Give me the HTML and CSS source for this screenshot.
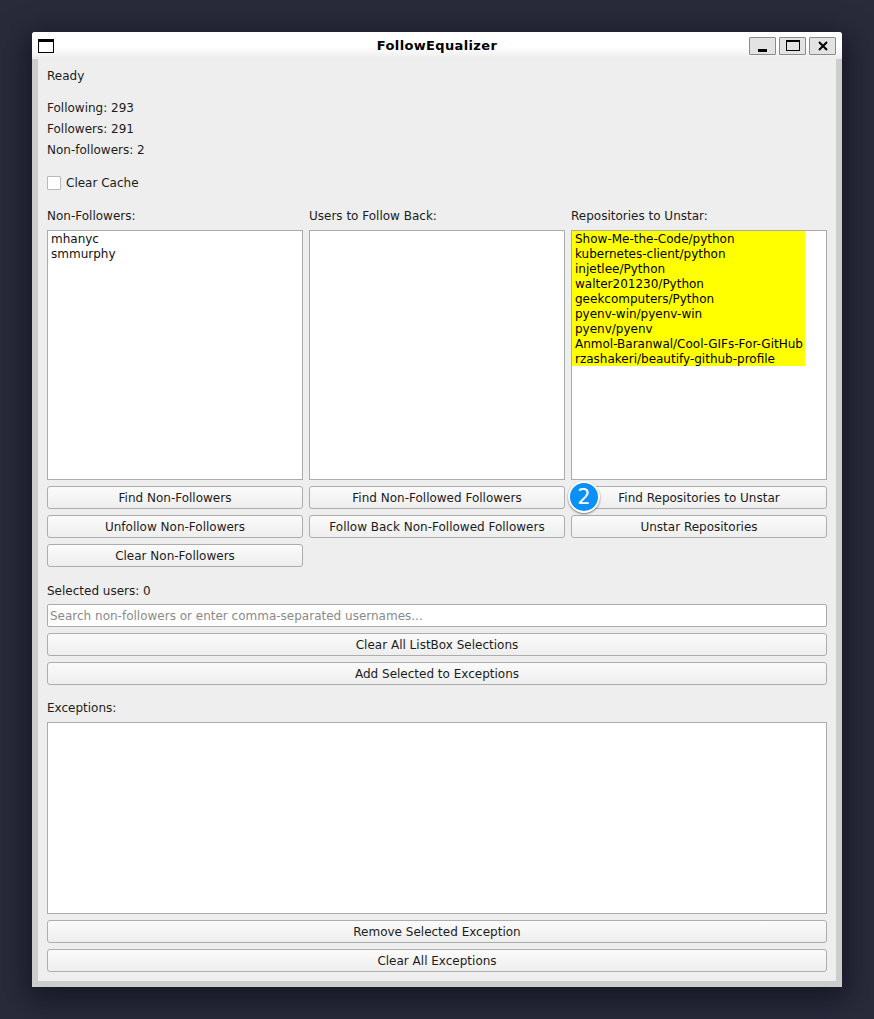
FILE: index.html
```html
<!DOCTYPE html>
<html lang="en">
<head>
<meta charset="utf-8">
<title>FollowEqualizer</title>
<link rel="stylesheet" href="styles.css">
</head>
<body>
<div class="window">
  <header class="titlebar">
    <svg class="app-icon" width="16" height="14" viewBox="0 0 16 14"><rect x="0.5" y="0.5" width="15" height="13" fill="#fff" stroke="#000"/><rect x="0" y="0" width="16" height="3" fill="#000"/></svg>
    <div class="title">FollowEqualizer</div>
    <div class="win-buttons">
      <button class="win-btn"><svg width="9" height="3" viewBox="0 0 9 3" class="i-min"><rect width="9" height="3" fill="#000"/></svg></button>
      <button class="win-btn"><svg width="14" height="11" viewBox="0 0 14 11"><rect x="0.5" y="0.5" width="13" height="10" fill="none" stroke="#000"/><rect width="14" height="2" fill="#000"/></svg></button>
      <button class="win-btn"><svg width="10" height="10" viewBox="0 0 10 10"><path d="M1 1 L9 9 M9 1 L1 9" stroke="#000" stroke-width="2" fill="none"/></svg></button>
    </div>
  </header>
  <main class="content">
    <div class="text-line">Ready</div>
    <div class="stats">
      <div class="text-line">Following: 293</div>
      <div class="text-line">Followers: 291</div>
      <div class="text-line">Non-followers: 2</div>
    </div>
    <label class="check-row"><span class="check"></span><span>Clear Cache</span></label>
    <section class="columns">
      <div class="column">
        <div class="text-line list-label">Non-Followers:</div>
        <div class="listbox tall"><div>mhanyc</div><div>smmurphy</div></div>
        <button class="btn">Find Non-Followers</button>
        <button class="btn">Unfollow Non-Followers</button>
        <button class="btn">Clear Non-Followers</button>
      </div>
      <div class="column">
        <div class="text-line list-label">Users to Follow Back:</div>
        <div class="listbox tall"></div>
        <button class="btn">Find Non-Followed Followers</button>
        <button class="btn">Follow Back Non-Followed Followers</button>
      </div>
      <div class="column">
        <div class="text-line list-label">Repositories to Unstar:</div>
        <div class="listbox tall hl-list">
          <div class="hl">Show-Me-the-Code/python</div>
          <div class="hl">kubernetes-client/python</div>
          <div class="hl">injetlee/Python</div>
          <div class="hl">walter201230/Python</div>
          <div class="hl">geekcomputers/Python</div>
          <div class="hl">pyenv-win/pyenv-win</div>
          <div class="hl">pyenv/pyenv</div>
          <div class="hl">Anmol-Baranwal/Cool-GIFs-For-GitHub</div>
          <div class="hl">rzashakeri/beautify-github-profile</div>
        </div>
        <div class="badge-wrap">
          <button class="btn">Find Repositories to Unstar</button>
          <span class="badge">2</span>
        </div>
        <button class="btn">Unstar Repositories</button>
      </div>
    </section>
    <section class="stack selected">
      <div class="text-line sel-label">Selected users: 0</div>
      <input class="search" type="text" placeholder="Search non-followers or enter comma-separated usernames...">
      <button class="btn">Clear All ListBox Selections</button>
      <button class="btn">Add Selected to Exceptions</button>
    </section>
    <section class="stack exceptions">
      <div class="text-line list-label">Exceptions:</div>
      <div class="listbox short"></div>
      <button class="btn">Remove Selected Exception</button>
      <button class="btn">Clear All Exceptions</button>
    </section>
  </main>
</div>
</body>
</html>
```
FILE: styles.css
```css
* { box-sizing: border-box; }
html, body { margin: 0; height: 100%; }
body {
  background: #292b3b;
  font-family: "DejaVu Sans", sans-serif;
  font-size: 12px;
  color: #1c1c1c;
  padding: 32px;
  overflow: hidden;
}
.window {
  width: 810px;
  height: 955px;
  background: #cdcdcd;
  border-radius: 3px 3px 0 0;
  box-shadow: 0 8px 28px 6px rgba(10, 10, 20, 0.55);
  display: flex;
  flex-direction: column;
}
.titlebar {
  height: 27px;
  flex: none;
  display: grid;
  grid-template-columns: 1fr auto 1fr;
  align-items: center;
  padding: 0 6px;
  background: linear-gradient(#fff 0%, #fff 55%, #ececec 100%);
  border-radius: 3px 3px 0 0;
}
.app-icon { display: block; }
.title {
  font-weight: bold;
  font-size: 13px;
  letter-spacing: 0.35px;
  color: #000;
  margin-top: -1px;
}
.win-buttons { display: flex; gap: 3px; justify-content: flex-end; }
.win-btn {
  width: 27px;
  height: 18px;
  padding: 0;
  border: 1px solid #8b8b8b;
  border-radius: 1px;
  background: #e3e3e3;
  display: flex;
  align-items: center;
  justify-content: center;
}
.i-min { margin-top: 9px; }
.content {
  flex: 1;
  margin: 0 6px 6px;
  background: #eeeeee;
  padding: 9px;
  display: flex;
  flex-direction: column;
}
.text-line { height: 15px; line-height: 17px; white-space: nowrap; }
.stats { display: flex; flex-direction: column; gap: 6px; margin-top: 17px; }
.check-row { display: flex; align-items: center; gap: 5px; height: 15px; margin-top: 18px; }
.check {
  width: 14px;
  height: 14px;
  background: #fff;
  border: 1px solid #b9b9b9;
  border-radius: 1px;
  flex: none;
}
.columns {
  display: grid;
  grid-template-columns: repeat(3, 256px);
  gap: 6px;
  margin-top: 18px;
  height: 359px;
}
.column, .stack { display: flex; flex-direction: column; gap: 6px; }
.list-label { margin-bottom: 1px; }
.listbox {
  background: #fff;
  border: 1px solid #ababab;
  padding: 1px 0;
  line-height: 15px;
  color: #111;
}
.listbox > div { padding-left: 3px; }
.tall { height: 250px; }
.short { height: 192px; }
.hl-list { display: flex; flex-direction: column; padding-top: 0; }
.listbox .hl { background: #ffff00; color: #000; width: 233px; height: 15px; line-height: 17px; white-space: nowrap; }
.btn {
  display: block;
  width: 100%;
  height: 23px;
  flex: none;
  padding: 0;
  font: inherit;
  color: #1c1c1c;
  border: 1px solid #adadad;
  border-radius: 3px;
  background: linear-gradient(#fbfbfb, #eeeeee);
}
.badge-wrap { position: relative; }
.badge {
  position: absolute;
  left: -3px;
  top: -5px;
  width: 32px;
  height: 32px;
  border-radius: 50%;
  background: #0a90f6;
  border: 2px solid #fff;
  box-shadow: 0 1px 2px rgba(0, 0, 0, 0.5);
  color: #fff;
  font-size: 21px;
  line-height: 28px;
  text-align: center;
}
.selected { margin-top: 16px; }
.search {
  display: block;
  width: 100%;
  height: 23px;
  padding: 0 2px;
  font: inherit;
  background: #fff;
  border: 1px solid #ababab;
  border-radius: 2px;
  outline: none;
}
.search::placeholder { color: #8a8a8a; opacity: 1; }
.exceptions { margin-top: 15px; }
```
